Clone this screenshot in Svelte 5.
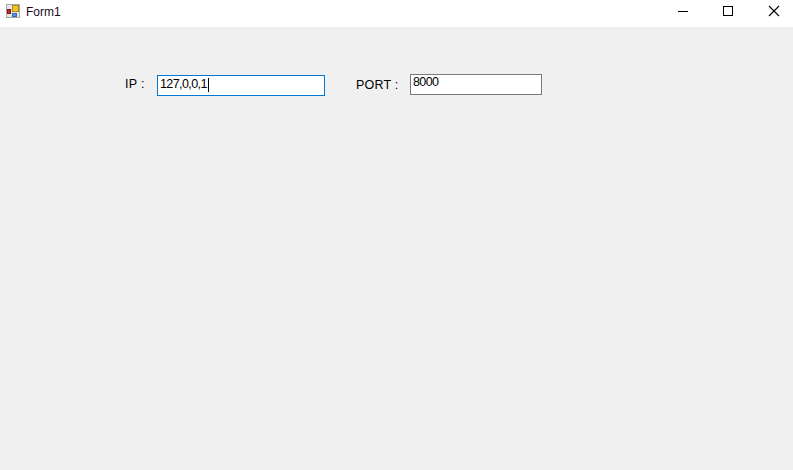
<script>
  const ip = '127,0,0,1';
  const port = '8000';
</script>

<div class="window">
  <header class="titlebar">
    <svg class="appicon" width="14" height="14" viewBox="0 0 14 14">
      <rect x="0.5" y="0.5" width="13" height="13" fill="#e6e6e6" stroke="#a8a8a8"/>
      <rect x="6.5" y="1.5" width="6" height="6" fill="#f6c428" stroke="#b08a18"/>
      <rect x="1.5" y="5.5" width="3" height="4" fill="#c62828" stroke="#7a1c1c"/>
      <rect x="6.5" y="9.5" width="4" height="3" fill="#5a90e4" stroke="#3a68b8"/>
    </svg>
    <span class="title">Form1</span>
    <div class="controls">
      <svg class="ctl" width="45" height="27" viewBox="0 0 45 27"><path d="M18 11.5H28" stroke="#000" fill="none"/></svg>
      <svg class="ctl" width="45" height="27" viewBox="0 0 45 27"><rect x="18.5" y="6.5" width="9" height="9" stroke="#000" fill="none"/></svg>
      <svg class="ctl" width="45" height="27" viewBox="0 0 45 27"><path d="M19 6L29 16M29 6L19 16" stroke="#000" fill="none" stroke-width="1.1"/></svg>
    </div>
  </header>
  <main class="form">
    <span class="label ip-label">IP :</span>
    <div class="box focused"><span>{ip}</span><i class="caret"></i></div>
    <span class="label port-label">PORT :</span>
    <div class="box port"><span>{port}</span></div>
  </main>
</div>

<style>
  :global(body) { margin: 0; background: #f0f0f0; }
  .window {
    width: 793px;
    height: 470px;
    display: flex;
    flex-direction: column;
    background: #f0f0f0;
    font-family: "Liberation Sans", Arial, sans-serif;
    color: #000;
    overflow: hidden;
  }
  .titlebar {
    height: 27px;
    flex: none;
    background: #fff;
    display: flex;
    align-items: flex-start;
    padding-left: 6px;
  }
  .appicon { margin-top: 4px; }
  .title {
    margin-left: 6px;
    font-size: 12px;
    line-height: 24px;
    color: #1a0a1a;
  }
  .controls { margin-left: auto; margin-right: -2px; display: flex; }
  .ctl { display: block; }
  .form {
    display: flex;
    align-items: flex-start;
    padding: 47px 0 0 125px;
  }
  .label { font-size: 12.5px; line-height: 14px; }
  .ip-label { margin-top: 3px; letter-spacing: 0.3px; width: 32px; }
  .port-label { margin-top: 4px; margin-left: 31px; width: 54px; letter-spacing: 0.2px; }
  .box {
    box-sizing: border-box;
    background: #fff;
    border: 1px solid #0078d7;
    width: 168px;
    height: 21px;
    margin-top: 1px;
    padding: 1px 0 0 2px;
    font-size: 12.5px;
    line-height: 15px;
    letter-spacing: -0.6px;
    display: flex;
    align-items: flex-start;
  }
  .box.port {
    border-color: #7a7a7a;
    width: 132px;
    margin-top: 0;
    padding-top: 0;
  }
  .caret {
    display: block;
    width: 1px;
    height: 14px;
    background: #000;
    margin: 1px 0 0 1px;
  }
</style>
